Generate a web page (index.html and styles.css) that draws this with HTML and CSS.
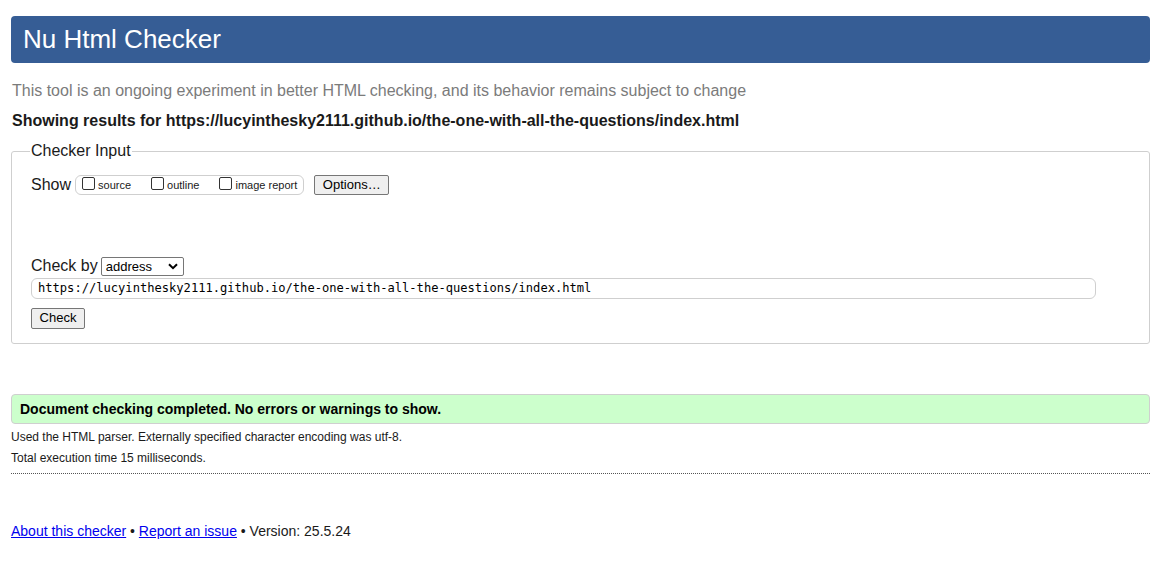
FILE: index.html
```html
<!DOCTYPE html>
<html>
<head>
<meta charset="utf-8">
<title>Nu Html Checker</title>
<link rel="stylesheet" href="styles.css">
</head>
<body>
<div class="page">
  <h1 class="title">Nu Html Checker</h1>
  <p class="tagline">This tool is an ongoing experiment in better HTML checking, and its behavior remains subject to change</p>
  <p class="showing">Showing results for https://lucyinthesky2111.github.io/the-one-with-all-the-questions/index.html</p>
  <fieldset class="input-box">
    <legend class="legend">Checker Input</legend>
    <div class="show-row">
      <span class="label">Show</span>
      <span class="opts">
        <label class="opt"><span class="cb"></span>source</label>
        <label class="opt"><span class="cb"></span>outline</label>
        <label class="opt"><span class="cb"></span>image report</label>
      </span>
      <span class="btn">Options…</span>
    </div>
    <div class="checkby-row">
      <span class="label">Check by</span>
      <span class="select">address<svg class="chev" width="10" height="7" viewBox="0 0 10 7"><path d="M1 1.2 L5 5.2 L9 1.2" fill="none" stroke="#000" stroke-width="2"/></svg></span>
    </div>
    <div class="url">https://lucyinthesky2111.github.io/the-one-with-all-the-questions/index.html</div>
    <span class="btn check">Check</span>
  </fieldset>
  <div class="success">Document checking completed. No errors or warnings to show.</div>
  <p class="info">Used the HTML parser. Externally specified character encoding was utf-8.</p>
  <p class="info">Total execution time 15 milliseconds.</p>
  <hr class="sep">
  <p class="footer"><a href="#">About this checker</a> • <a href="#">Report an issue</a> • Version: 25.5.24</p>
</div>
</body>
</html>
```

FILE: styles.css
```css
html, body {
  margin: 0;
  padding: 0;
  background: #fff;
}
body {
  font-family: "Liberation Sans", Arial, sans-serif;
  color: #000;
}
.page {
  width: 1139px;
  margin-left: 11px;
  padding-top: 16px;
}
.title {
  margin: 0;
  height: 47px;
  box-sizing: border-box;
  background: #365d95;
  border-radius: 4px;
  color: #fff;
  font-weight: normal;
  font-size: 26px;
  line-height: 47px;
  padding-left: 12px;
}
.tagline {
  margin: 19px 0 0 1px;
  font-size: 16px;
  line-height: 18px;
  color: #7b7b7b;
}
.showing {
  margin: 12px 0 0 1px;
  font-size: 16px;
  line-height: 18px;
  font-weight: bold;
  color: #1a1a1a;
}
.input-box {
  margin: 12px 0 0 0;
  border: 1px solid #cfcfcf;
  border-radius: 3px;
  padding: 0 0 14px 19px;
  min-width: 0;
}
.legend {
  font-size: 16px;
  padding: 0 1px;
  margin-left: -1px;
  color: #1a1a1a;
  line-height: 18px;
}
.label {
  font-size: 16px;
  color: #1a1a1a;
}
.show-row {
  display: flex;
  align-items: center;
  margin-top: 15px;
  height: 20px;
}
.opts {
  display: inline-flex;
  align-items: center;
  margin-left: 4px;
  border: 1px solid #cfcfcf;
  border-radius: 6px;
  height: 18px;
  padding: 0 6px 0 6px;
  gap: 20px;
}
.opt {
  display: inline-flex;
  align-items: center;
  font-size: 11px;
  color: #1a1a1a;
}
.cb {
  width: 13px;
  height: 13px;
  box-sizing: border-box;
  border: 1px solid #333;
  border-radius: 2px;
  margin-right: 3px;
  margin-top: -3px;
  background: #fff;
}
.btn {
  display: inline-block;
  box-sizing: border-box;
  border: 1px solid #767676;
  border-radius: 2px;
  background: #efefef;
  font-size: 13px;
  line-height: 18px;
  padding: 0 8px;
  color: #000;
}
.show-row .btn {
  margin-left: 10px;
  height: 20px;
  width: 75px;
  text-align: center;
  padding: 0;
}
.checkby-row {
  display: flex;
  align-items: center;
  margin-top: 61px;
  height: 20px;
}
.select {
  display: inline-flex;
  align-items: center;
  justify-content: space-between;
  box-sizing: border-box;
  width: 83px;
  height: 19px;
  margin-left: 3px;
  border: 1px solid #767676;
  border-radius: 2px;
  font-size: 13px;
  padding: 0 5px 0 4px;
}
.url {
  margin-top: 2px;
  width: 1065px;
  height: 21px;
  box-sizing: border-box;
  border: 1px solid #cfcfcf;
  border-radius: 6px;
  font-family: "DejaVu Sans Mono", "Liberation Mono", monospace;
  font-size: 12.1px;
  line-height: 19px;
  padding-left: 6px;
}
.check {
  margin-top: 9px;
  height: 21px;
  width: 54px;
  font-size: 13px;
  text-align: center;
  padding: 0;
}
.success {
  margin-top: 50px;
  height: 30px;
  box-sizing: border-box;
  border: 1px solid #cfcfcf;
  border-radius: 4px;
  background: #ccffcc;
  font-size: 14px;
  font-weight: bold;
  line-height: 28px;
  padding-left: 8px;
}
.info {
  margin: 6px 0 0 0;
  font-size: 12px;
  line-height: 15px;
  color: #1a1a1a;
}
.sep {
  margin: 7px 0 0 0;
  border: 0;
  border-top: 1px dotted #555;
  height: 0;
}
.footer {
  margin: 49px 0 0 0;
  font-size: 14px;
  line-height: 16px;
  color: #1a1a1a;
}
.footer a {
  color: #0000ee;
}
```
